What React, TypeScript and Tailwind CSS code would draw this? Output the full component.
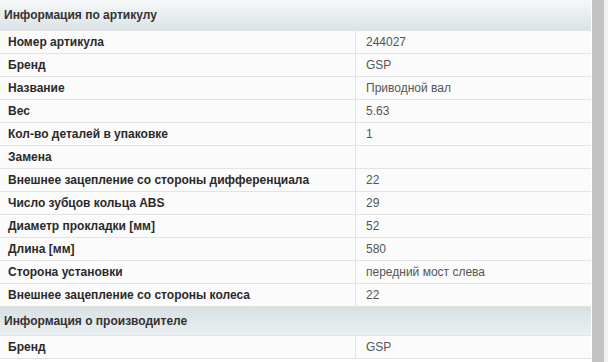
const articleRows: [string, string][] = [
  ["Номер артикула", "244027"],
  ["Бренд", "GSP"],
  ["Название", "Приводной вал"],
  ["Вес", "5.63"],
  ["Кол-во деталей в упаковке", "1"],
  ["Замена", ""],
  ["Внешнее зацепление со стороны дифференциала", "22"],
  ["Число зубцов кольца ABS", "29"],
  ["Диаметр прокладки [мм]", "52"],
  ["Длина [мм]", "580"],
  ["Сторона установки", "передний мост слева"],
  ["Внешнее зацепление со стороны колеса", "22"],
];

const makerRows: [string, string][] = [["Бренд", "GSP"]];

function Row({ label, value }: { label: string; value: string }) {
  return (
    <div className="flex h-[23px] border-b border-[#e3e3e3] bg-[#fbfbfb] text-[12px] leading-[22px]">
      <div className="w-[356px] shrink-0 border-r border-[#e3e3e3] pl-[8px] font-bold text-[#2a2a2a]">
        {label}
      </div>
      <div className="flex-1 pl-[10px] text-[#555]">{value}</div>
    </div>
  );
}

export default function App() {
  return (
    <main
      className="flex h-[362px] w-[608px] overflow-hidden bg-white"
      style={{ fontFamily: "'Liberation Sans', Arial, sans-serif" }}
    >
      <div className="w-[591px] shrink-0">
        <div className="h-[31px] border-b border-[#e3e3e3] bg-gradient-to-b from-[#f6f8f9] to-[#dbe3e7] pl-[4px] text-[12px] font-bold leading-[30px] text-[#333]">
          Информация по артикулу
        </div>
        {articleRows.map(([label, value], i) => (
          <Row key={i} label={label} value={value} />
        ))}
        <div className="h-[29px] border-b border-[#e3e3e3] bg-gradient-to-b from-[#d8e0e4] to-[#ebf0f2] pl-[4px] text-[12px] font-bold leading-[28px] text-[#333]">
          Информация о производителе
        </div>
        {makerRows.map(([label, value], i) => (
          <Row key={i} label={label} value={value} />
        ))}
      </div>
      <div className="w-[1px] bg-white" />
      <div className="w-[12px] bg-[#c3c3c3]" />
      <div className="flex-1 bg-[#f1f1f1]" />
    </main>
  );
}
